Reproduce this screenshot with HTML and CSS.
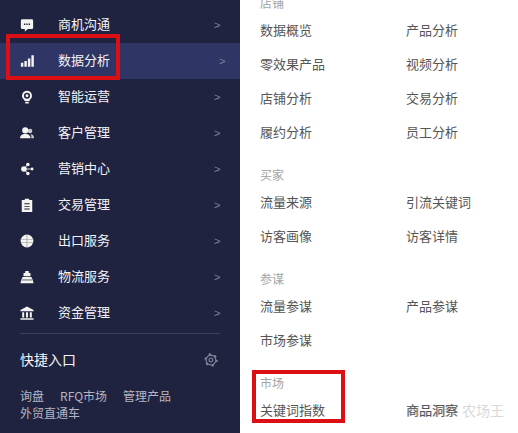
FILE: index.html
```html
<!DOCTYPE html>
<html lang="zh-CN">
<head>
  <meta charset="UTF-8" />
  <title>数据分析</title>
  <link rel="stylesheet" href="styles.css">
</head>
<body>
  <div class="page">
    <div class="sidebar">
      <ul class="menu">
        <li class="menu-item">
          <svg class="icon" viewBox="0 0 16 16"><path d="M2.500 1.500h11a1.500 1.500 0 0 1 1.500 1.500v8a1.500 1.500 0 0 1-1.500 1.500H9l-3.500 3v-3h-3A1.500 1.500 0 0 1 1 11V3a1.500 1.500 0 0 1 1.500-1.500z"/><path class="cut" d="M4.500 6.300h1.600v1.600H4.500zM7.200 6.300h1.600v1.600H7.200zM9.900 6.300h1.600v1.600H9.900z"/></svg>
          <span class="label">商机沟通</span><span class="arrow">&gt;</span>
        </li>
        <li class="menu-item active">
          <svg class="icon" viewBox="0 0 16 16"><path d="M1 10h2.800v4.500H1zM5 8h2.800v6.500H5zM9 5h2.800v9.500H9zM13 1.500h2.800v13H13z"/></svg>
          <span class="label">数据分析</span><span class="arrow">&gt;</span>
        </li>
        <li class="menu-item">
          <svg class="icon" viewBox="0 0 16 16"><path d="M8 .8a5.700 5.700 0 0 0-3 10.500v1.400h6v-1.400A5.700 5.700 0 0 0 8 .8zM6 13.500h4V15.500H6z"/><circle class="cut" cx="8" cy="6.500" r="3.500"/><circle cx="8" cy="6.500" r="1.700"/></svg>
          <span class="label">智能运营</span><span class="arrow">&gt;</span>
        </li>
        <li class="menu-item">
          <svg class="icon" viewBox="0 0 16 16"><circle cx="6" cy="5" r="3.500"/><path d="M0 14c0-3.500 2.500-5 6-5s6 1.500 6 5z"/><circle class="dim" cx="11.500" cy="5.800" r="2.600"/><path class="dim" d="M13 14h3c0-2.800-1.500-4.300-4-4.500 1 1 1 3 1 4.500z"/></svg>
          <span class="label">客户管理</span><span class="arrow">&gt;</span>
        </li>
        <li class="menu-item">
          <svg class="icon" viewBox="0 0 16 16"><circle cx="4.500" cy="8" r="3.200"/><circle cx="9" cy="2.800" r="2"/><circle cx="9" cy="13.200" r="2"/><circle cx="13.800" cy="8" r="1.600"/><path class="line" d="M4.500 8 9 2.800M4.500 8 9 13.200M4.500 8h9"/></svg>
          <span class="label">营销中心</span><span class="arrow">&gt;</span>
        </li>
        <li class="menu-item">
          <svg class="icon" viewBox="0 0 16 16"><path d="M2 2.200h3.500V.8h5v1.400H14V16H2z"/><path class="cut" d="M5 6h6v1.100H5zM5 9h6v1.100H5zM5 12h6v1.100H5z"/></svg>
          <span class="label">交易管理</span><span class="arrow">&gt;</span>
        </li>
        <li class="menu-item">
          <svg class="icon" viewBox="0 0 16 16"><circle cx="8" cy="8" r="7.300"/><path class="thin" d="M1 5.600h14v.7H1zM1 9.600h14v.7H1zM7.600 1h.7v14h-.7z"/></svg>
          <span class="label">出口服务</span><span class="arrow">&gt;</span>
        </li>
        <li class="menu-item">
          <svg class="icon" viewBox="0 0 16 16"><path d="M6 1h4v2.500h2V7H4V3.500h2zM3 8h10l1.500 3 1 4H.5l1-4z"/><path class="cut" d="M2 11h12v.8H2z"/></svg>
          <span class="label">物流服务</span><span class="arrow">&gt;</span>
        </li>
        <li class="menu-item">
          <svg class="icon" viewBox="0 0 16 16"><path d="M8 .5 15.500 4.500V6H.5V4.500zM2.500 7h2.300v6H2.500zM6.850 7h2.300v6h-2.300zM11.200 7h2.300v6h-2.300zM.5 14h15v1.800H.5z"/></svg>
          <span class="label">资金管理</span><span class="arrow">&gt;</span>
        </li>
      </ul>

      <div class="quick">
        <div class="quick-head">
          <span class="quick-title">快捷入口</span>
          <svg class="gear" viewBox="0 0 16 16"><circle cx="8" cy="8" r="5.600"/><circle class="teeth" cx="8" cy="8" r="6.800"/><circle cx="8" cy="8" r="2.200"/></svg>
        </div>
        <div class="quick-links">
          <a>询盘</a><a>RFQ市场</a><a>管理产品</a><a>外贸直通车</a>
        </div>
      </div>
    </div>

    <div class="panel">
      <div class="group">
        <h4 class="group-title">店铺</h4>
        <div class="links">
          <a>数据概览</a><a>产品分析</a>
          <a>零效果产品</a><a>视频分析</a>
          <a>店铺分析</a><a>交易分析</a>
          <a>履约分析</a><a>员工分析</a>
        </div>
      </div>
      <div class="group">
        <h4 class="group-title">买家</h4>
        <div class="links">
          <a>流量来源</a><a>引流关键词</a>
          <a>访客画像</a><a>访客详情</a>
        </div>
      </div>
      <div class="group">
        <h4 class="group-title">参谋</h4>
        <div class="links">
          <a>流量参谋</a><a>产品参谋</a>
          <a>市场参谋</a>
        </div>
      </div>
      <div class="group">
        <h4 class="group-title">市场</h4>
        <div class="links">
          <a>关键词指数</a><a class="smudged">商品洞察</a>
        </div>
      </div>
    </div>

    <div class="mark mark-menu"></div>
    <div class="mark mark-market"></div>
    <div class="watermark">农场王</div>
  </div>
</body>
</html>
```

FILE: styles.css
```css
* {
  box-sizing: border-box;
  margin: 0;
  padding: 0;
}
html, body {
  height: 433px;
  overflow: hidden;
  background: #fff;
}
body {
  font-family: "Noto Sans CJK SC", "Liberation Sans", sans-serif;
}
.page {
  position: relative;
  display: flex;
  width: 518px;
  height: 433px;
  overflow: hidden;
}

/* left menu */
.sidebar {
  width: 240px;
  height: 433px;
  padding-top: 7px;
  background: #20233f;
  flex-shrink: 0;
}
.menu {
  list-style: none;
}
.menu-item {
  display: flex;
  align-items: center;
  height: 36px;
  padding-left: 20px;
  color: #f2f3f7;
  font-size: 13px;
}
.menu-item.active {
  background: #2f3565;
}
.icon {
  width: 14px;
  height: 14px;
  fill: #f4f4f0;
  flex-shrink: 0;
}
.icon .cut {
  fill: #20233f;
}
.icon .thin {
  fill: #20233f;
  opacity: 0.5;
}
.icon .dim {
  opacity: 0.8;
}
.icon .line {
  fill: none;
  stroke: #f4f4f0;
  stroke-width: 1;
}
.active .icon .cut {
  fill: #2f3565;
}
.label {
  width: 156px;
  margin-left: 24px;
  padding-bottom: 3px;
}
.arrow {
  color: #7d8199;
  font-size: 11px;
  font-family: "Liberation Sans", sans-serif;
}
.active .arrow {
  margin-left: 5px;
}

/* shortcuts */
.quick {
  margin: 2px 20px 0;
  border-top: 1px solid #3a3f63;
}
.quick-head {
  display: flex;
  align-items: center;
  justify-content: space-between;
  height: 52px;
}
.quick-title {
  padding-bottom: 2px;
  color: #f4f5f8;
  font-size: 14px;
}
.gear {
  width: 14px;
  height: 14px;
  margin-right: 2px;
  fill: none;
  stroke: #8a8da3;
  stroke-width: 1.200;
}
.gear .teeth {
  stroke-width: 1.600;
  stroke-dasharray: 2.500 4.620;
}
.quick-links {
  margin-top: 1px;
  color: #b4b6c4;
  font-size: 12px;
  line-height: 17px;
}
.quick-links a {
  display: inline-block;
  margin-right: 16px;
}

/* right panel */
.panel {
  flex: 1;
  margin-top: -7px;
  padding-left: 20px;
}
.group {
  margin-bottom: 15px;
}
.group-title {
  height: 21px;
  color: #a3a3a3;
  font-size: 12px;
  font-weight: normal;
  line-height: 19px;
}
.links {
  display: grid;
  grid-template-columns: 146px 1fr;
  grid-auto-rows: 34px;
  color: #555;
  font-size: 13px;
  line-height: 32px;
}
.smudged {
  text-shadow: 1px 0 0 #ccc;
}

/* annotations drawn over the page */
.mark {
  position: absolute;
  border: 4px solid #dc0f14;
}
.mark-menu {
  left: 6px;
  top: 34px;
  width: 114px;
  height: 46px;
}
.mark-market {
  left: 252px;
  top: 370px;
  width: 93px;
  height: 53px;
}
.watermark {
  position: absolute;
  left: 462px;
  top: 400px;
  color: #d8d8d8;
  font-size: 14px;
  line-height: 20px;
}
```
